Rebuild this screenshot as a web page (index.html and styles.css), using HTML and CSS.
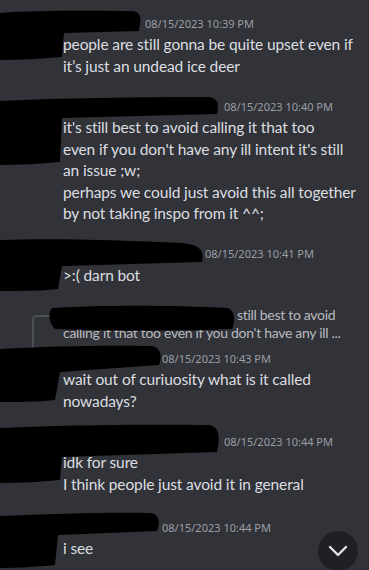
FILE: index.html
```html
<!DOCTYPE html>
<html>
<head>
<meta charset="utf-8">
<link rel="stylesheet" href="styles.css">
</head>
<body>
<div class="chat">
  <div class="msg m1">
    <div class="head"><span class="name n1"></span><span class="time">08/15/2023 10:39 PM</span></div>
    <div class="body">people are still gonna be quite upset even if it’s just an undead ice deer</div>
  </div>
  <div class="msg m2">
    <div class="head"><span class="name n2"></span><span class="time">08/15/2023 10:40 PM</span></div>
    <div class="body">it's still best to avoid calling it that too<br>even if you don't have any ill intent it's still an issue ;w;<br>perhaps we could just avoid this all together by not taking inspo from it ^^;</div>
  </div>
  <div class="msg m3">
    <div class="head"><span class="name n3"></span><span class="time">08/15/2023 10:41 PM</span></div>
    <div class="body">&gt;:( darn bot</div>
  </div>
  <div class="msg m4">
    <div class="reply">
      <span class="spine"></span>
      <div class="reply-text"><span class="reply-name"></span>still best to avoid<br>calling it that too even if you don't have any ill ...</div>
    </div>
    <div class="head"><span class="name n4"></span><span class="time">08/15/2023 10:43 PM</span></div>
    <div class="body">wait out of curiuosity what is it called nowadays?</div>
  </div>
  <div class="msg m5">
    <div class="head"><span class="name n2"></span><span class="time">08/15/2023 10:44 PM</span></div>
    <div class="body">idk for sure<br>I think people just avoid it in general</div>
  </div>
  <div class="msg m6">
    <div class="head"><span class="name n4"></span><span class="time">08/15/2023 10:44 PM</span></div>
    <div class="body">i see</div>
  </div>
</div>

<svg class="redactions" width="369" height="570" viewBox="0 0 369 570">
  <g fill="#000">
    <path d="M0,13 C40,10 90,11 132,11 C141,12 141,18 140,24 L139,31 L64,33 L62,57 C40,59 20,60 0,60 Z"/>
    <path d="M0,101 C60,98 140,97 210,97 C219,99 219,106 217,114 L62,118 L60,162 C40,164 20,165 0,165 Z"/>
    <path d="M0,240 C50,238 120,240 182,243 C202,245 204,252 202,262 L62,266 L58,289 C40,291 20,291 0,291 Z"/>
    <path d="M52,308 C100,305 170,305 228,308 C236,312 235,322 232,329 C180,331 110,331 55,329 C48,322 48,312 52,308 Z"/>
    <path d="M0,349 C50,346 110,345 152,346 C162,349 162,356 159,365 L60,372 L55,400 C35,402 18,402 0,402 Z"/>
    <path d="M0,428 C60,425 150,424 210,425 C220,428 220,438 217,452 L62,457 L60,480 C40,482 20,483 0,483 Z"/>
    <path d="M0,516 C50,514 110,512 152,513 C160,516 160,524 157,531 L58,535 L55,565 C35,567 18,568 0,568 Z"/>
  </g>
</svg>

<button class="scroll-down" aria-label="Jump to present">
  <svg width="20" height="12" viewBox="0 0 20 12"><path d="M2 2 L10 10 L18 2" fill="none" stroke="#e3e5e8" stroke-width="2.4" stroke-linecap="round" stroke-linejoin="round"/></svg>
</button>
</body>
</html>
```

FILE: styles.css
```css
html, body {
  margin: 0;
  padding: 0;
  background: #313338;
  width: 369px;
  height: 570px;
  overflow: hidden;
  font-family: "Lato", "Noto Sans", sans-serif;
}

.chat {
  display: flex;
  flex-direction: column;
  padding-top: 12px;
}

.msg {
  padding-left: 63px;
  padding-right: 11px;
}

.m2, .m3, .m5 { margin-top: 18px; }
.m4 { margin-top: 18px; }
.m6 { margin-top: 21px; }

.head {
  display: flex;
  align-items: center;
  height: 22px;
}

.name {
  display: inline-block;
  height: 14px;
  margin-right: 4px;
}
.n1 { width: 78px; }
.n2 { width: 157px; }
.n3 { width: 138px; }
.n4 { width: 95px; }

.time {
  font-family: "Noto Sans", "Lato", sans-serif;
  font-size: 11px;
  color: #9c9ea6;
  white-space: nowrap;
}

.body {
  font-size: 15.5px;
  letter-spacing: -0.12px;
  line-height: 21.5px;
  color: #dcdee1;
}

.reply {
  position: relative;
  height: 38px;
  margin-bottom: 5px;
}

.spine {
  position: absolute;
  left: -31px;
  top: 11px;
  width: 17px;
  height: 40px;
  border-top: 2px solid #4e5058;
  border-left: 2px solid #4e5058;
  border-top-left-radius: 5px;
}

.reply-text {
  font-size: 14px;
  letter-spacing: -0.3px;
  line-height: 18px;
  color: #b8bac0;
  padding-top: 2px;
  white-space: nowrap;
}

.reply-name {
  display: inline-block;
  width: 174px;
}

.redactions {
  position: absolute;
  left: 0;
  top: 0;
  pointer-events: none;
}

.scroll-down {
  position: absolute;
  left: 318px;
  top: 531px;
  width: 40px;
  height: 40px;
  border-radius: 50%;
  border: none;
  padding: 0;
  background: #1f2024;
  display: flex;
  align-items: center;
  justify-content: center;
}
```
